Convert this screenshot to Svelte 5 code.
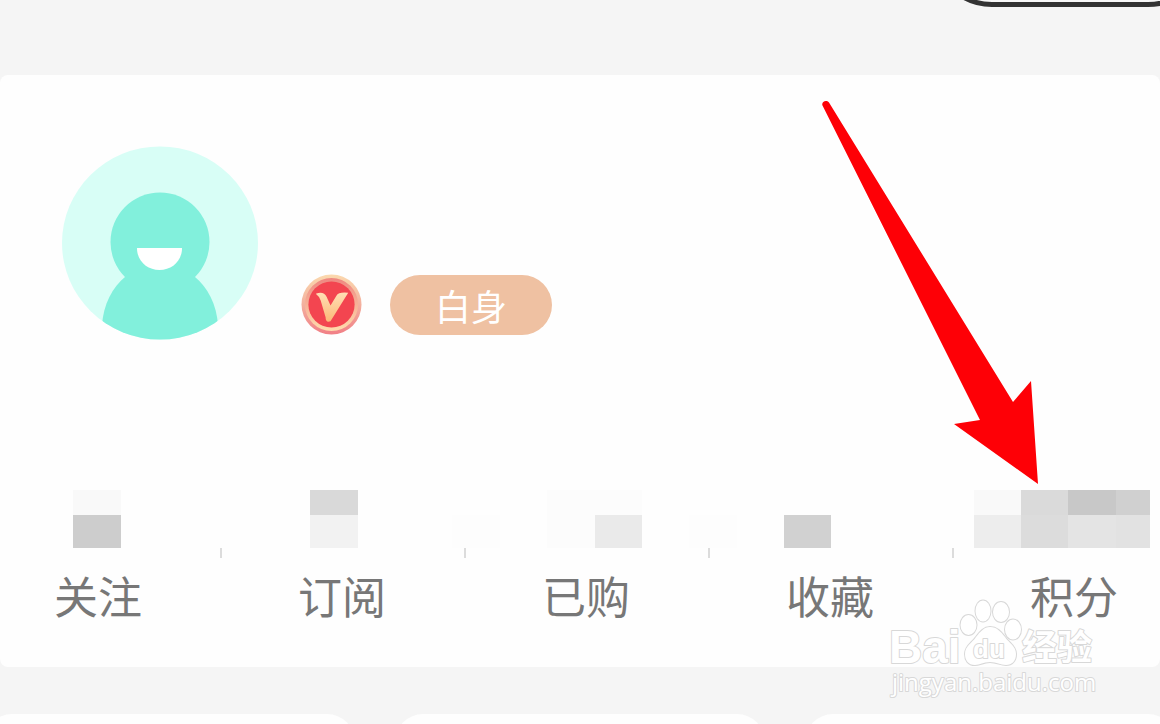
<script lang="ts">
	const stats = ['关注', '订阅', '已购', '收藏', '积分'];

	// Masked numbers: column and row on the mosaic grid, with the shade
	const cells = [
		{ col: 2, row: 1, color: '#f9f9f9' },
		{ col: 2, row: 2, color: '#cdcdcd' },
		{ col: 7, row: 1, color: '#d9d9d9' },
		{ col: 7, row: 2, color: '#f2f2f2' },
		{ col: 10, row: 2, color: '#fdfdfd' },
		{ col: 12, row: 1, color: '#fcfcfc' },
		{ col: 12, row: 2, color: '#fcfcfc' },
		{ col: 13, row: 1, color: '#fcfcfc' },
		{ col: 13, row: 2, color: '#eaeaea' },
		{ col: 15, row: 2, color: '#fdfdfd' },
		{ col: 17, row: 2, color: '#d1d1d1' },
		{ col: 21, row: 1, color: '#f9f9f9' },
		{ col: 21, row: 2, color: '#ededed' },
		{ col: 22, row: 1, color: '#dadada' },
		{ col: 22, row: 2, color: '#dcdcdc' },
		{ col: 23, row: 1, color: '#c8c8c8' },
		{ col: 23, row: 2, color: '#e4e4e4' },
		{ col: 24, row: 1, color: '#d0d0d0' },
		{ col: 24, row: 2, color: '#e2e2e2' }
	];
</script>

<div class="page">
	<header class="topbar">
		<button class="capsule" aria-label="Menu"></button>
	</header>

	<main class="card">
		<section class="profile">
			<svg class="avatar" viewBox="0 0 196 194" aria-hidden="true">
				<defs>
					<clipPath id="avatar-clip">
						<ellipse cx="98" cy="97" rx="98" ry="96.5" />
					</clipPath>
				</defs>
				<g clip-path="url(#avatar-clip)">
					<rect width="196" height="194" fill="#d8fef6" />
					<circle cx="98" cy="96" r="49.5" fill="#82f0dc" />
					<path d="M40 180C41 158 51 141 63 131H133C145 141 155 158 156 180V194H40Z" fill="#82f0dc" />
				</g>
				<path d="M75 102H120C120 115 110 124 97.5 124S75 115 75 102Z" fill="#fff" />
			</svg>

			<div class="badges">
				<svg class="medal" viewBox="0 0 62 62" aria-hidden="true">
					<defs>
						<linearGradient id="rim" x1="0" y1="0" x2="0" y2="1">
							<stop offset="0" stop-color="#fbd9ae" />
							<stop offset="0.5" stop-color="#f3b09e" />
							<stop offset="1" stop-color="#f17f86" />
						</linearGradient>
						<linearGradient id="ring" x1="0" y1="0" x2="0" y2="1">
							<stop offset="0" stop-color="#ee8680" />
							<stop offset="1" stop-color="#ffdcad" />
						</linearGradient>
						<linearGradient id="vee" x1="0" y1="0" x2="0" y2="1">
							<stop offset="0" stop-color="#ffdfb5" />
							<stop offset="1" stop-color="#fcb877" />
						</linearGradient>
					</defs>
					<circle cx="31" cy="31" r="30.5" fill="url(#rim)" />
					<circle cx="31" cy="31" r="27" fill="url(#ring)" />
					<circle cx="31" cy="31" r="23.5" fill="#f34550" />
					<path d="M15 20Q23 17 26 23L30 32L36 22Q38 18 48 19L30 48Q25 50 25 44L20 27Q19 23 15 20Z" fill="url(#vee)" />
				</svg>
				<span class="level">白身</span>
			</div>
		</section>

		<section class="summary">
			<div class="mosaic" aria-hidden="true">
				{#each cells as cell}
					<span style="grid-area: {cell.row} / {cell.col}; background: {cell.color}"></span>
				{/each}
			</div>
			<nav class="stats">
				{#each stats as label}
					<a class="stat" href="#{label}">{label}</a>
				{/each}
			</nav>
		</section>

		<svg class="arrow" viewBox="0 0 218 386" aria-hidden="true">
			<path d="M2.5 6.5C1 3 6 0 9 3.5L193 303L211 282L218 385L134 325L160 321Z" fill="#fe0006" />
		</svg>
	</main>

	<div class="tiles">
		<div class="tile"></div>
		<div class="tile"></div>
		<div class="tile"></div>
	</div>

	<svg class="watermark" viewBox="0 0 212 104" aria-hidden="true">
		<g class="outline">
			<text class="latin" x="1" y="63">Bai</text>
			<ellipse cx="80.5" cy="25" rx="8" ry="10" />
			<ellipse cx="95" cy="11" rx="7.5" ry="10.5" />
			<ellipse cx="113" cy="12" rx="8" ry="10" />
			<ellipse cx="125" cy="29.5" rx="8" ry="10" />
			<path d="M102 27C109 27 113 32 117 37C121 43 128 46 128 54C128 61 124 65 118 65C112 65 109 62 102 62S92 65 87 65C80 65 77 60 77 54C77 46 84 43 88 37C92 32 96 27 102 27Z" />
			<text class="du" x="85" y="58">du</text>
			<text class="cjk" x="134" y="60">经验</text>
			<text class="url" x="4" y="91">jingyan.baidu.com</text>
		</g>
	</svg>
</div>

<style>
	:global(body) {
		margin: 0;
		background: #f5f5f5;
	}

	.page {
		position: relative;
		display: flex;
		flex-direction: column;
		height: 100vh;
		overflow: hidden;
		background: #f5f5f5;
		font-family: "Noto Sans CJK SC", sans-serif;
	}

	.topbar {
		display: flex;
		flex: none;
		justify-content: flex-end;
		height: 75px;
		overflow: hidden;
	}

	.capsule {
		box-sizing: border-box;
		width: 276px;
		height: 120px;
		margin: -113px -48px 0 0;
		border: 5px solid #333;
		border-radius: 60px;
		background: #f8f8f8;
	}

	.card {
		position: relative;
		flex: none;
		overflow: hidden;
		border-radius: 8px;
		background: #fefefe;
	}

	.profile {
		display: flex;
		gap: 44px;
		padding: 71px 62px 0;
	}

	.avatar {
		width: 196px;
		height: 194px;
	}

	.badges {
		display: flex;
		align-items: flex-end;
		gap: 28px;
		padding-bottom: 5px;
		margin-left: -1px;
	}

	.medal {
		width: 61px;
		height: 61px;
	}

	.level {
		width: 162px;
		border-radius: 31px;
		background: #efc1a2;
		color: #fff;
		font-size: 36px;
		line-height: 60px;
		text-align: center;
	}

	.summary {
		padding: 150px 0 43px;
	}

	.mosaic {
		display: grid;
		grid-template-columns: repeat(23, 47fr) 34fr;
		grid-template-rows: 25px 33px;
		margin: 0 10px 0 26px;
	}

	.stats {
		display: grid;
		grid-template-columns: repeat(5, 1fr);
		margin: 0 -38px 0 -22px;
	}

	.stat {
		padding: 18px 4px 0 0;
		background: linear-gradient(#dcdcdc, #dcdcdc) right top / 2px 10px no-repeat;
		color: #777;
		font-size: 44px;
		line-height: 58px;
		text-align: center;
		text-decoration: none;
	}

	.arrow {
		position: absolute;
		top: 24px;
		right: 122px;
		width: 218px;
		height: 386px;
	}

	.tiles {
		display: grid;
		flex: none;
		grid-template-columns: repeat(3, 1fr);
		gap: 40px;
		margin: 47px -16px 0;
	}

	.tile {
		height: 120px;
		border-radius: 28px;
		background: #fefefe;
	}

	.watermark {
		position: absolute;
		right: 60px;
		bottom: 20px;
		width: 212px;
		height: 104px;
		overflow: visible;
	}

	.outline {
		fill: #fff;
		stroke: #d8d8d8;
		stroke-width: 2px;
		stroke-linejoin: round;
		paint-order: stroke;
	}

	.latin,
	.du {
		font-family: "Liberation Sans", sans-serif;
		font-size: 46px;
		font-weight: 700;
	}

	.du {
		font-size: 26px;
	}

	.cjk {
		font-size: 35px;
		font-weight: 700;
	}

	.url {
		font-family: "Open Sans", sans-serif;
		font-size: 24px;
		font-weight: 400;
	}
</style>
